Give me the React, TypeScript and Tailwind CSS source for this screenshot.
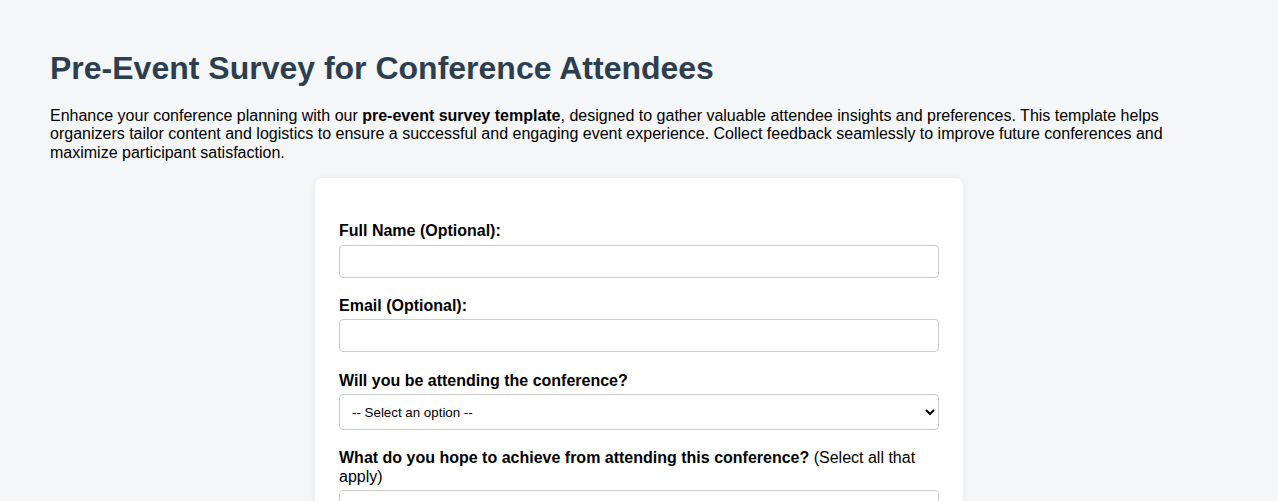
import React from 'react';

const font = { fontFamily: '"Liberation Sans", Arial, sans-serif' };

const Label: React.FC<{ children: React.ReactNode }> = ({ children }) => (
  <label className="block mb-[4px] text-base leading-[18.4px] text-black">{children}</label>
);

export default function App() {
  return (
    <div className="min-h-screen bg-[#f5f6f8] px-[50px] pt-[50px] pb-10" style={font}>
      <h1 className="text-[32px] leading-[37px] font-bold text-[#2c3e50] mb-[20px]">
        Pre-Event Survey for Conference Attendees
      </h1>
      <p className="text-base leading-[18.4px] text-black mb-[16px]">
        Enhance your conference planning with our <strong>pre-event survey template</strong>, designed to gather
        valuable attendee insights and preferences. This template helps organizers tailor content and logistics to
        ensure a successful and engaging event experience. Collect feedback seamlessly to improve future conferences
        and maximize participant satisfaction.
      </p>

      <div className="mx-auto w-[648px] bg-white rounded-lg shadow-[0_0_8px_rgba(0,0,0,0.06)] px-6 pt-[44px] pb-6">
        <div className="mb-[19px]">
          <Label>
            <span className="font-bold">Full Name (Optional):</span>
          </Label>
          <input type="text" className="block w-full h-[33px] border border-[#ccc] rounded px-2 bg-white" />
        </div>

        <div className="mb-[20px]">
          <Label>
            <span className="font-bold">Email (Optional):</span>
          </Label>
          <input type="email" className="block w-full h-[33px] border border-[#ccc] rounded px-2 bg-white" />
        </div>

        <div className="mb-[19px]">
          <Label>
            <span className="font-bold">Will you be attending the conference?</span>
          </Label>
          <select
            defaultValue=""
            className="block w-full h-[36px] border border-[#ccc] rounded px-2 bg-white text-[13.33px] text-black"
          >
            <option value="">-- Select an option --</option>
            <option>Yes</option>
            <option>No</option>
            <option>Maybe</option>
          </select>
        </div>

        <div className="mb-[19px]">
          <Label>
            <span className="font-bold">What do you hope to achieve from attending this conference?</span> (Select
            all that apply)
          </Label>
          <select
            multiple
            className="block w-full h-[90px] border border-[#ccc] rounded px-2 py-[8px] bg-white text-[13.33px] text-black"
          >
            <option>Networking</option>
            <option>Learning new skills</option>
            <option>Industry insights</option>
            <option>Meeting speakers</option>
            <option>Exploring products</option>
            <option>Career opportunities</option>
            <option>Other</option>
          </select>
        </div>
      </div>
    </div>
  );
}
